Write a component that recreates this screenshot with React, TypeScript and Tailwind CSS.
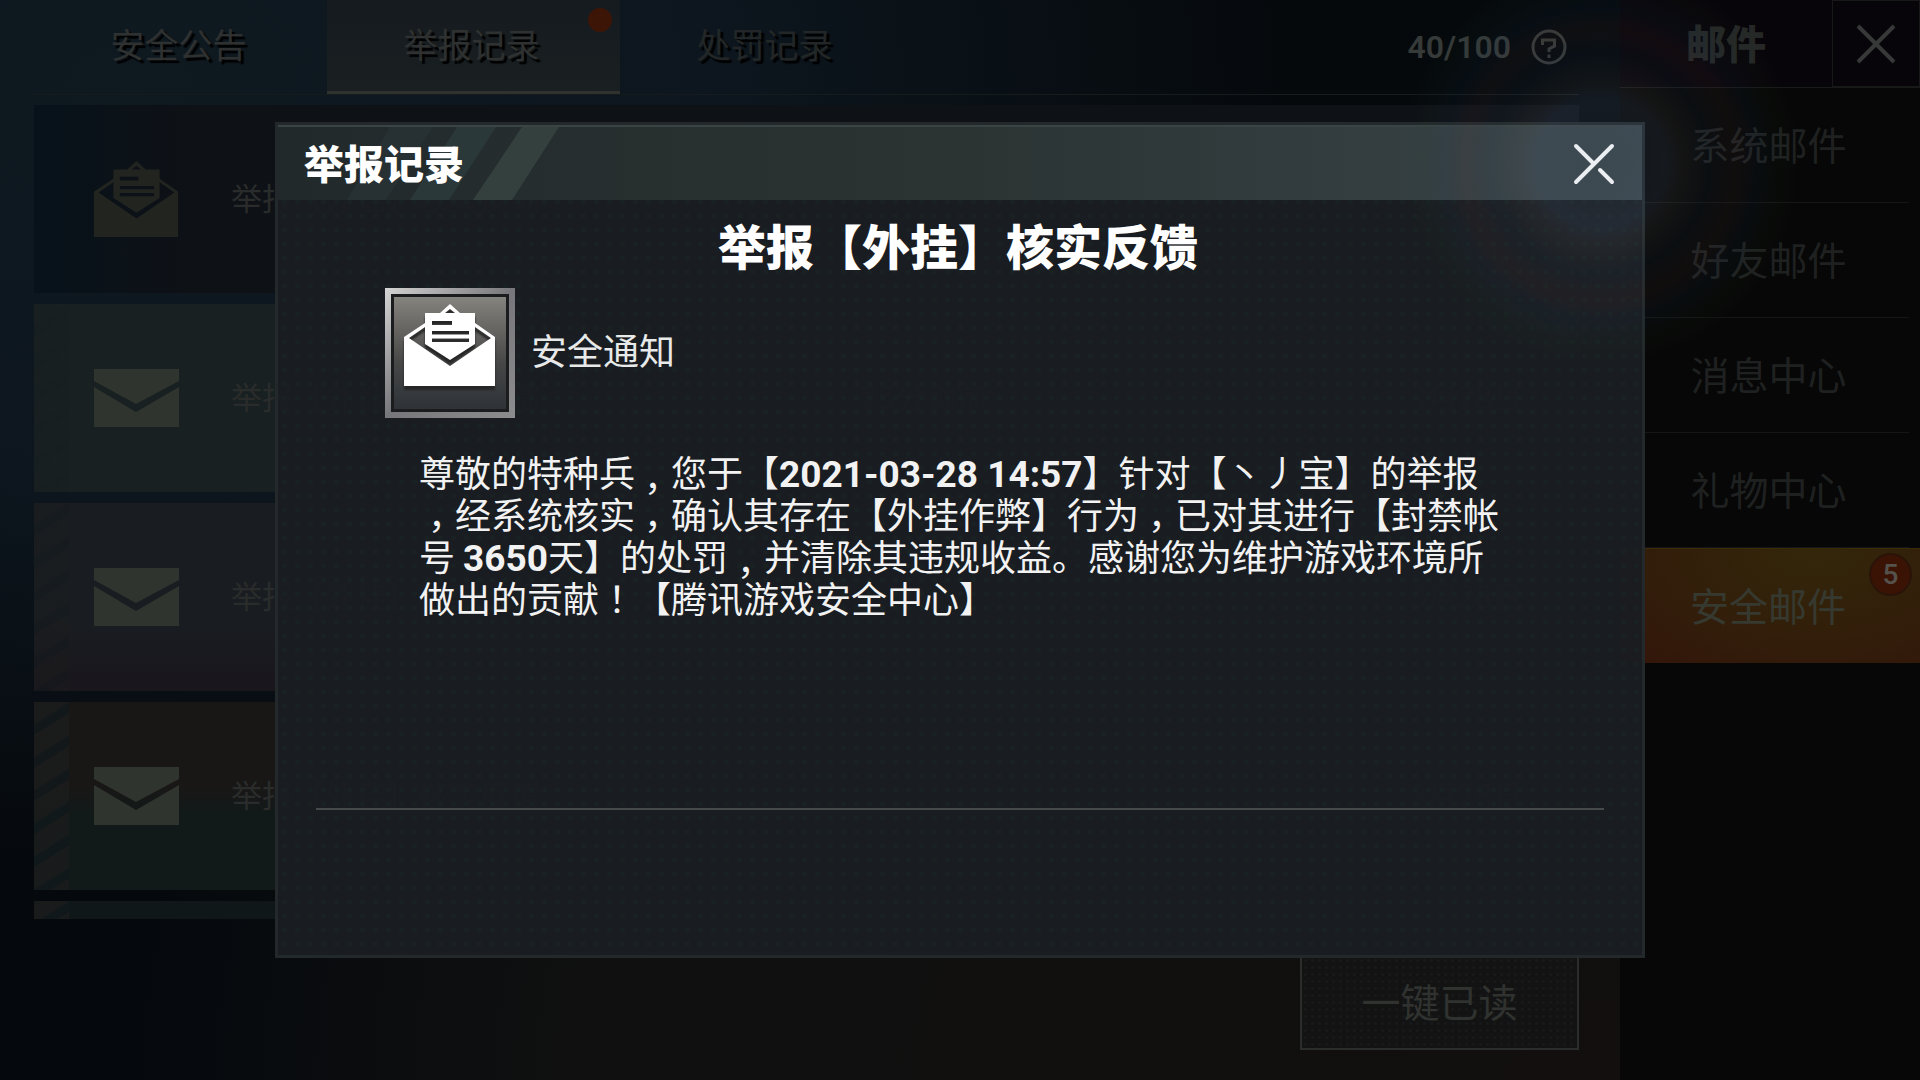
import React from 'react';

type Mail = { opened: boolean; tone: string; stripes: string; title?: string; received?: string; date?: string };

const mails: Mail[] = [
  {
    opened: true,
    tone: 'bg-linear-to-r from-[#07121a] from-0% to-[#0e1116] to-10%',
    stripes: 'opacity-0',
    title: '举报【外挂】核实反馈',
    date: '3月28日',
  },
  {
    opened: false,
    tone: 'bg-[#182021]',
    stripes: 'opacity-20',
    title: '举报【外挂】核实反馈',
    received: '25分钟前',
    date: '3月28日',
  },
  {
    opened: false,
    tone: 'bg-linear-to-b from-[#191d21] from-60% to-[#19161c]',
    stripes: 'opacity-40',
    title: '举报【外挂】核实反馈',
    date: '3月28日',
  },
  {
    opened: false,
    tone: 'bg-linear-to-b from-[#181716] from-45% to-[#111919] to-60%',
    stripes: 'opacity-80',
    title: '举报【外挂】核实反馈',
    date: '3月28日',
  },
  { opened: false, tone: 'bg-[#101718]', stripes: 'opacity-80' },
];

const navItems = ['系统邮件', '好友邮件', '消息中心', '礼物中心'];

function OpenEnvelope({ className }: { className: string }) {
  return (
    <svg viewBox="0 0 92 82" className={className} fill="currentColor" aria-hidden="true">
      <path
        fillRule="evenodd"
        d="M46 0 56 9H71V19L91 33V82H0V33L21 19V9H36ZM41 9H51L46 5ZM21 23 5 34 46 62 87 34 71 23V40L46 56 21 40ZM28 17V21H48V17ZM28 27V30.500H65V27ZM28 34.500V38H65V34.500Z"
      />
    </svg>
  );
}

function ClosedEnvelope() {
  return (
    <svg viewBox="0 0 85 58" className="h-[58px] w-[85px]" fill="currentColor" aria-hidden="true">
      <path d="M0 0H85V12L42 35 0 12Z" />
      <path d="M0 18 42 43 85 18V58H0Z" />
    </svg>
  );
}

/* Full-width punctuation centred in its cell */
function Mark({ children }: { children: string }) {
  return (
    <span className="inline-block h-[42px] w-9 text-center align-bottom [font-feature-settings:'halt']">{children}</span>
  );
}

function Line({ children }: { children: React.ReactNode }) {
  return <span className="block h-[42px]">{children}</span>;
}

function MailRow({ mail }: { mail: Mail }) {
  return (
    <li className={`relative flex h-[188px] shrink-0 items-center ${mail.tone}`}>
      <span
        className={`absolute inset-y-0 left-0 w-[35px] bg-[repeating-linear-gradient(148deg,#1b1c1c_0px,#1b1c1c_18px,#11181b_20px,#11181b_28px)] ${mail.stripes}`}
      />
      <span className={`relative w-[197px] pl-[60px] ${mail.opened ? 'text-[#22241f]' : 'text-[#30342f]'}`}>
        {mail.opened ? <OpenEnvelope className="h-[76px] w-[85px]" /> : <ClosedEnvelope />}
      </span>
      <span className="flex flex-1 items-center pr-14 pb-1 text-[31px] text-[#2a2c2b]">
        <span className="w-[629px]">{mail.title}</span>
        <span className="flex-1">{mail.received}</span>
        <span>{mail.date}</span>
      </span>
    </li>
  );
}

export default function App() {
  return (
    <div className="relative flex min-h-screen overflow-hidden bg-[#070707] font-['Noto_Sans_CJK_SC',sans-serif]">
      <main className="flex min-w-0 flex-1 flex-col bg-[radial-gradient(ellipse_at_8%_8%,#0f1920_0%,#0d161e_28%,transparent_55%),radial-gradient(ellipse_at_100%_100%,#120f0e_0%,#101010_45%,transparent_65%),linear-gradient(#05090c,#05090d)] pr-[41px] pl-[34px]">
        <header className="flex h-[95px] items-stretch border-b border-[#161b1c]">
          <nav className="flex text-[34px] text-[#2e3130] [&_button]:[text-shadow:3px_3px_1px_#000000]">
            <button type="button" className="w-[293px] pr-1 pb-2">安全公告</button>
            <button
              type="button"
              className="relative w-[293px] border-b-3 border-[#30322f] bg-linear-to-b from-[#151a1f] to-[#1a2021] pr-1 pb-1"
            >
              举报记录
              <span className="absolute top-2 right-2 size-6 rounded-full bg-[#3d1506]" />
            </button>
            <button type="button" className="w-[293px] pr-1 pb-2 text-[#222626]">处罚记录</button>
          </nav>
          <div className="ml-auto flex items-center gap-5 pr-3 text-[#363a39]">
            <span className="font-['Roboto',sans-serif] text-[32px] font-semibold">40/100</span>
            <button type="button" aria-label="帮助">
              <svg viewBox="0 0 36 36" className="size-9" fill="none" stroke="currentColor" strokeWidth="3" aria-hidden="true">
                <circle cx="18" cy="18" r="16" />
                <path d="M11.500 16V11H23.500V17L18 20V23" />
                <path d="M18 25.500V29" />
              </svg>
            </button>
          </div>
        </header>
        <ul className="mt-[10px] flex h-[814px] flex-col gap-[11px] overflow-hidden">
          {mails.map((mail, i) => (
            <MailRow key={i} mail={mail} />
          ))}
        </ul>
        <div className="mt-9 flex justify-end">
          <button
            type="button"
            className="h-[95px] w-[279px] border-2 border-[#2a2d2b] bg-[#121312] bg-[radial-gradient(circle,#17191a_1px,transparent_2px)] bg-[length:7px_7px] pb-1 text-[39px] text-[#303230]"
          >
            一键已读
          </button>
        </div>
      </main>

      <aside className="w-[300px] shrink-0 bg-[#070707]">
        <header className="flex h-[88px] border-b border-[#181a19] bg-[#08050a]">
          <h2 className="flex flex-1 items-center justify-center pb-1 text-[40px] font-black text-[#252827]">邮件</h2>
          <button type="button" aria-label="关闭邮件" className="grid w-[88px] place-items-center border border-[#171918]">
            <svg viewBox="0 0 40 40" className="size-10 text-[#363937]" stroke="currentColor" strokeWidth="4" aria-hidden="true">
              <path d="M2 2 38 38M38 2 2 38" />
            </svg>
          </button>
        </header>
        <nav className="flex flex-col text-[39px] text-[#1f2121]">
          {navItems.map((label) => (
            <button key={label} type="button" className="mr-[11px] h-[115px] border-b border-[#141515] pb-1 pl-2">
              {label}
            </button>
          ))}
          <button
            type="button"
            className="relative h-[115px] border-t border-[#3b2b0a] bg-[radial-gradient(ellipse_at_65%_0%,#33270a_0%,#321d0a_60%,#33150a_100%)] pr-1 pb-1 text-[#36392f]"
          >
            安全邮件
            <span className="absolute top-1 right-2 grid size-[43px] place-items-center rounded-full border-2 border-[#2a1409] bg-[#3a1305] font-['Roboto',sans-serif] text-[28px] leading-none font-medium text-[#55524c]">
              5
            </span>
          </button>
        </nav>
      </aside>

      <div className="absolute inset-0 grid place-items-center">
        <section
          role="dialog"
          aria-labelledby="dialog-title"
          className="flex min-h-[836px] w-full max-w-[1370px] flex-col border-3 border-[#23292b] bg-[#1a1d21]/97 bg-[radial-gradient(circle,#192122_2px,transparent_3px)] bg-[length:13px_14px]"
        >
          <header className="relative flex h-[75px] items-center justify-between border-t-2 border-[#3b4445] bg-linear-to-r from-[#22292b] via-[#2b3433] via-50% to-[#3a4449] pr-[26px] pl-[26px]">
            <svg viewBox="0 0 340 73" className="absolute inset-y-0 left-0 h-full w-[340px]" aria-hidden="true">
              <path d="M112 0H155L108 73H69Z" fill="#273134" />
              <path d="M179 0H218L171 73H132Z" fill="#2b3839" />
              <path d="M244 0H281L234 73H195Z" fill="#33403e" />
            </svg>
            <h1 id="dialog-title" className="relative pb-1 text-[40px] font-black text-white">举报记录</h1>
            <button type="button" aria-label="关闭">
              <svg viewBox="0 0 44 44" className="size-11 text-white" stroke="currentColor" strokeWidth="4" strokeLinecap="round" aria-hidden="true">
                <path d="M4 4 22 22M28 28 40 40M40 4 4 40" />
              </svg>
            </button>
          </header>
          <h2 className="mt-3 pr-1 text-center text-[48px] leading-[64px] font-black text-white">举报【外挂】核实反馈</h2>
          <div className="mt-3 flex items-center gap-4 pl-[107px]">
            <div className="size-[130px] bg-linear-to-br from-[#d5d5d5] via-[#77777b] to-[#8d8d8f] p-[6px]">
              <div className="grid size-full place-items-center border-3 border-[#1b1c1d] bg-linear-to-b from-[#85837d] via-[#464646] via-60% to-[#2e3338] pb-4">
                <OpenEnvelope className="h-[82px] w-[92px] text-white drop-shadow-[0_4px_1px_#252525]" />
              </div>
            </div>
            <span className="pb-2 text-[36px] text-[#e8e9e9]">安全通知</span>
          </div>
          <p className="mt-8 flex-1 pl-[141px] text-[36px] leading-[42px] whitespace-nowrap text-[#f2f2f2] [&_b]:font-['Roboto',sans-serif] [&_b]:text-[37px] [&_b]:font-bold">
            <Line>
              尊敬的特种兵<Mark>，</Mark>您于【<b>2021-03-28 14:57</b>】针对【丶丿宝】的举报
            </Line>
            <Line>
              <Mark>，</Mark>经系统核实<Mark>，</Mark>确认其存在【外挂作弊】行为<Mark>，</Mark>已对其进行【封禁帐
            </Line>
            <Line>
              号 <b>3650</b>天】的处罚<Mark>，</Mark>并清除其违规收益。感谢您为维护游戏环境所
            </Line>
            <Line>
              做出的贡献<Mark>！</Mark>【腾讯游戏安全中心】
            </Line>
          </p>
          <div className="mx-[38px] h-[147px] border-t-2 border-[#45494a]" />
        </section>
      </div>

      <div className="pointer-events-none absolute -top-9 right-[120px] size-[400px] rounded-full bg-[radial-gradient(closest-side,#5a78901c_0%,#5a70902c_32%,#6a6a6a20_42%,#30507018_55%,#6040401c_68%,#20406018_78%,#20402010_90%,transparent_100%)]" />
    </div>
  );
}
